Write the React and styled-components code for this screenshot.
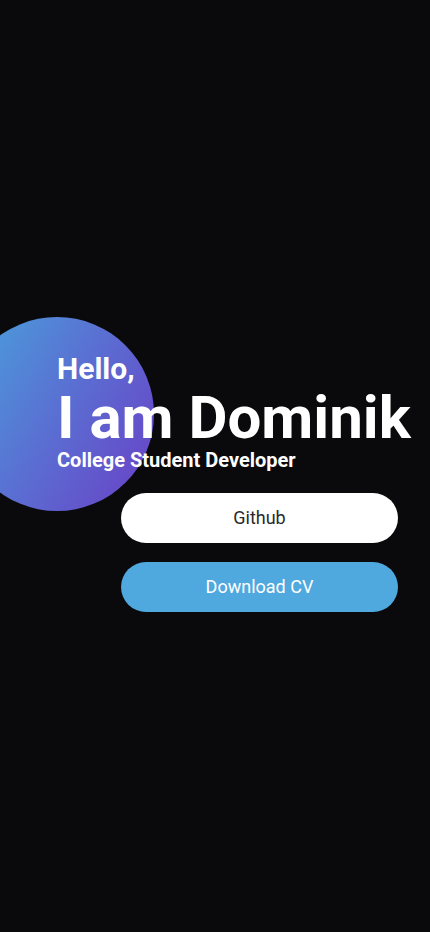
import React from 'react';
import styled, { createGlobalStyle } from 'styled-components';

const GlobalStyle = createGlobalStyle`
  html, body {
    margin: 0;
    padding: 0;
    background: #0a0a0c;
    font-family: Roboto, "Liberation Sans", sans-serif;
  }
`;

const Page = styled.main`
  min-height: 100vh;
  box-sizing: border-box;
  padding-top: 30px;
  display: flex;
  flex-direction: column;
  justify-content: center;
  overflow: hidden;
`;

const Hero = styled.section`
  position: relative;
  display: flex;
  flex-direction: column;
  padding: 0 32px 0 57px;
`;

// decorative gradient blob behind the greeting
const Blob = styled.div`
  position: absolute;
  left: -40px;
  top: -34px;
  width: 194px;
  height: 194px;
  border-radius: 50%;
  background: linear-gradient(120deg, #48a4dc 0%, #5a6fd2 50%, #6a3fc6 100%);
`;

const Intro = styled.div`
  position: relative;
  display: flex;
  flex-direction: column;
  color: #fff;
  font-weight: 700;
`;

const Hello = styled.h2`
  margin: 0;
  font-size: 30px;
  line-height: 36px;
`;

const Name = styled.h1`
  margin: 0;
  font-size: 60px;
  line-height: 61px;
  white-space: nowrap;
`;

const Role = styled.p`
  margin: 0;
  font-size: 20px;
  line-height: 24px;
`;

const Actions = styled.div`
  position: relative;
  display: flex;
  flex-direction: column;
  gap: 19px;
  margin-top: 21px;
  padding-left: 64px;
`;

const Button = styled.button`
  height: 50px;
  border: none;
  border-radius: 25px;
  font-family: Roboto, "Liberation Sans", sans-serif;
  font-size: 18px;
  font-weight: 400;
  cursor: pointer;
  background: ${p => (p.$primary ? '#4fa8de' : '#ffffff')};
  color: ${p => (p.$primary ? '#ffffff' : '#2b2b2b')};
`;

export default function App() {
  return (
    <>
      <GlobalStyle />
      <Page>
        <Hero>
          <Blob />
          <Intro>
            <Hello>Hello,</Hello>
            <Name>I am Dominik</Name>
            <Role>College Student Developer</Role>
          </Intro>
          <Actions>
            <Button>Github</Button>
            <Button $primary>Download CV</Button>
          </Actions>
        </Hero>
      </Page>
    </>
  );
}
